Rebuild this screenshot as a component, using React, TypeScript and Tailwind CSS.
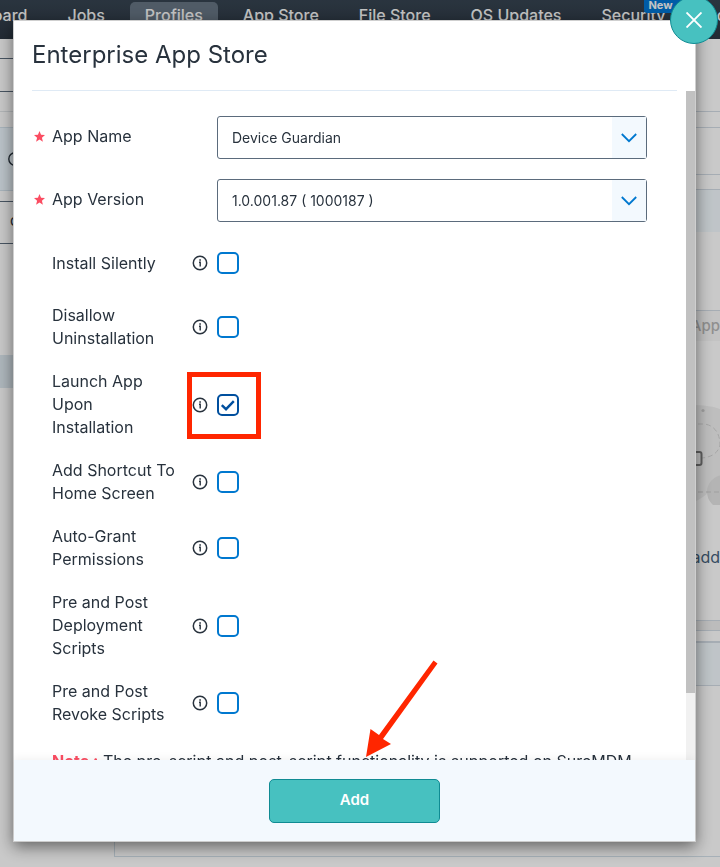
import React, { useState } from 'react';

interface ToggleOption {
  id: string;
  lines: string[];
  highlighted?: boolean;
}

const OPTIONS: ToggleOption[] = [
  { id: 'install-silently', lines: ['Install Silently'] },
  { id: 'disallow-uninstall', lines: ['Disallow', 'Uninstallation'] },
  { id: 'launch-app', lines: ['Launch App', 'Upon', 'Installation'], highlighted: true },
  { id: 'add-shortcut', lines: ['Add Shortcut To', 'Home Screen'] },
  { id: 'auto-grant', lines: ['Auto-Grant', 'Permissions'] },
  { id: 'deploy-scripts', lines: ['Pre and Post', 'Deployment', 'Scripts'] },
  { id: 'revoke-scripts', lines: ['Pre and Post', 'Revoke Scripts'] },
];

const NAV_ITEMS = ['Dashboard', 'Jobs', 'Profiles', 'App Store', 'File Store', 'OS Updates', 'Security', 'Account'];

const InfoIcon = () => (
  <svg viewBox="0 0 16 16" className="w-4 h-4 shrink-0 text-[#28323d]" fill="none" stroke="currentColor" aria-hidden="true">
    <circle cx="8" cy="8" r="6.7" strokeWidth="1.5" />
    <path d="M7 7.2H8.2V11.5" strokeWidth="1.4" />
    <path d="M7.3 5H8.9" strokeWidth="1.4" />
  </svg>
);

const StarIcon = () => (
  <svg viewBox="0 0 10 10" className="w-[11px] h-[11px]" fill="#fb4d62" aria-hidden="true">
    <path d="M5 0L6.4 3.4L10 3.7L7.2 6.1L8.1 9.7L5 7.8L1.9 9.7L2.8 6.1L0 3.7L3.6 3.4Z" />
  </svg>
);

interface SelectRowProps {
  id: string;
  label: string;
  value: string;
}

const SelectRow: React.FC<SelectRowProps> = ({ id, label, value }) => (
  <div className="flex shrink-0 items-center">
    <span className="w-[18px] shrink-0 pb-[2px]"><StarIcon /></span>
    <label htmlFor={id} className="w-[165px] shrink-0 pb-[2px]">{label}</label>
    <div className="relative flex-1">
      <select
        id={id}
        defaultValue={value}
        className="block w-full h-[43px] appearance-none rounded-[3px] border border-[#5b6b7c] bg-white pl-[14px] text-[14px] text-[#28323d]"
      >
        <option>{value}</option>
      </select>
      <span className="pointer-events-none absolute inset-y-px right-px w-[34px] flex items-center justify-center bg-[#f3f9fe]">
        <svg viewBox="0 0 16 10" className="w-4 h-[10px]" fill="none" stroke="#0078cf" strokeWidth="1.8" aria-hidden="true">
          <path d="M0.8 1L8 8.2L15.2 1" />
        </svg>
      </span>
    </div>
  </div>
);

interface ToggleRowProps {
  option: ToggleOption;
  checked: boolean;
  onToggle: () => void;
}

const ToggleRow: React.FC<ToggleRowProps> = ({ option, checked, onToggle }) => (
  <div className="flex shrink-0 items-center min-h-[42px] pl-[18px]">
    <label htmlFor={option.id} className="w-[140px] shrink-0">
      {option.lines.map(line => (
        <span key={line} className="block">{line}</span>
      ))}
    </label>
    <div className="relative flex items-center gap-[9px]">
      <InfoIcon />
      <span className="relative block w-[22px] h-[22px]">
        <input
          id={option.id}
          type="checkbox"
          checked={checked}
          onChange={onToggle}
          className="block w-[22px] h-[22px] appearance-none rounded-[5px] border-2 border-[#0078cf] bg-white checked:border-[#004f9e]"
        />
        {checked && (
          <svg viewBox="0 0 22 22" className="pointer-events-none absolute inset-0" fill="none" stroke="#004f9e" strokeWidth="2.4" aria-hidden="true">
            <path d="M4.8 11.2L9 15.2L16.8 7.2" />
          </svg>
        )}
      </span>
      {option.highlighted && (
        <span className="pointer-events-none absolute -left-[5px] -right-[22px] -top-[22px] h-[67px] border-[5px] border-[#ff2600]" />
      )}
    </div>
  </div>
);

const Backdrop = () => (
  <div className="flex min-h-screen flex-col bg-[#fcfcfc]" aria-hidden="true">
    <header className="h-[39px] overflow-hidden bg-linear-to-b from-[#35424f] to-[#2b3541]">
      <nav className="flex w-max gap-[10px] -ml-[71px] pt-[2px] text-[16px] font-medium text-[#f4f4f4]">
        {NAV_ITEMS.map(item => (
          <a
            key={item}
            href="#"
            tabIndex={-1}
            className={`relative h-[30px] px-[15px] leading-[27px] ${item === 'Profiles' ? 'rounded-[5px] bg-[#647280]' : ''}`}
          >
            {item}
            {item === 'Security' && (
              <span className="absolute -top-[4px] -right-1 h-[15px] w-10 rounded-[3px] bg-[#0074d0] pl-1 text-[11px] font-bold leading-[15px]">
                New
              </span>
            )}
          </a>
        ))}
      </nav>
    </header>

    <div className="flex flex-1">
      <aside className="w-[114px] shrink-0 text-[#28323d]">
        <div className="h-5 border-b border-[#5b6b7c]" />
        <div className="h-[33px] border-b border-[#5b6b7c]" />
        <div className="h-5 border-b border-[#dfe3e6]" />
        <div className="mt-[15px] h-16 flex items-center border-y border-[#d2e0ea] bg-[#eaf4fb] pl-2">
          <svg viewBox="0 0 14 14" className="w-[14px] h-[14px]" fill="none" stroke="currentColor" strokeWidth="1.4">
            <circle cx="7" cy="7" r="6.2" />
          </svg>
        </div>
        <div className="mt-[10px] h-[43px] border-y border-[#5b6b7c] pl-[10px] text-[15px] leading-[38px]">c</div>
        <div className="mt-[111px] h-[33px] bg-[#dae5ec]" />
      </aside>

      <main className="mb-[10px] min-w-0 flex-1 border-b border-l border-[#d0dde6]">
        <div className="h-[73px] border-b border-[#d0d9e2]" />
        <div className="h-4 border-b border-[#d0d9e2]" />
        <div className="h-[47px] border-b border-[#d0d9e2]" />
        <div className="h-[15px] border-b border-[#d0d9e2]" />
        <div className="h-[42px] bg-[#eff6fa]" />
        <div className="h-[79px] border-b border-[#d0d9e2]" />
        <div className="flex h-[30px] justify-end overflow-hidden bg-[#f4f4f4] text-[15px] font-medium leading-[30px] text-[#b4b4b4]">App</div>
        <div className="mt-16 flex h-[100px] justify-end">
          <svg viewBox="0 0 30 100" className="h-[100px] w-[30px]" fill="none">
            <path d="M0 0C14 0 22 1 30 4V76C24 84 12 94 0 99Z" fill="#eeeeee" />
            <circle cx="34" cy="87" r="17" fill="#e2e2e2" />
            <circle cx="13" cy="5.500" r="1.600" fill="#c8c8c8" />
            <path d="M0 19H14C24 20 30 28 30 40C28 48 22 52 12 53" stroke="#d0d0d0" strokeDasharray="5 3" />
            <path d="M0 87H30" stroke="#c8c8c8" strokeDasharray="5 3" />
            <rect x="-6" y="47" width="17.500" height="13" rx="2" stroke="#777" strokeWidth="2" />
          </svg>
        </div>
        <div className="mt-10 flex h-6 justify-end overflow-hidden text-[16px] leading-6 text-[#44607a]">add</div>
        <div className="mt-[51px] h-[11px] border-y border-[#d0d9e2] bg-[#ececec]" />
        <div className="mt-[10px] h-[45px] border-b border-t-2 border-[#d0d9e2] bg-[#eff6fa]" />
      </main>
    </div>
  </div>
);

const App: React.FC = () => {
  const [selected, setSelected] = useState<string[]>(['launch-app']);

  const toggle = (id: string) => {
    setSelected(prev => (prev.includes(id) ? prev.filter(s => s !== id) : [...prev, id]));
  };

  return (
    <div className="relative h-screen overflow-hidden font-['Inter','Liberation_Sans',sans-serif]">
      <Backdrop />

      {/* Modal */}
      <div className="fixed inset-0 flex bg-black/20 pt-5 pr-6 pb-[25px] pl-[13px]">
        <div
          role="dialog"
          aria-labelledby="dialog-title"
          className="relative flex min-w-0 flex-1 flex-col border border-[#cfcfcf] bg-white text-[#28323d] shadow-[0_5px_15px_rgba(0,0,0,0.5)]"
        >
          <button
            type="button"
            aria-label="Close"
            className="absolute -right-[23px] -top-[25px] z-10 flex h-12 w-12 items-center justify-center rounded-full border border-[#0f8b93] bg-[#47c1c0]"
          >
            <svg viewBox="0 0 16 16" className="h-4 w-4" fill="none" stroke="white" strokeWidth="1.900" aria-hidden="true">
              <path d="M0.500 0.500L15.500 15.500M15.500 0.500L0.500 15.500" />
            </svg>
          </button>

          <div className="mx-[18px] h-[70px] shrink-0 border-b border-[#dfeaf5]">
            <h2 id="dialog-title" className="text-[24px] leading-[68px]">Enterprise App Store</h2>
          </div>

          <div className="flex min-h-0 flex-1">
            <div className="flex min-w-0 flex-1 flex-col gap-5 overflow-hidden pt-[25px] pl-5 pr-[39px] text-[16px] leading-[23px]">
              <SelectRow id="app-name" label="App Name" value="Device Guardian" />
              <SelectRow id="app-version" label="App Version" value="1.0.001.87 ( 1000187 )" />
              {OPTIONS.map(option => (
                <ToggleRow
                  key={option.id}
                  option={option}
                  checked={selected.includes(option.id)}
                  onToggle={() => toggle(option.id)}
                />
              ))}
              <p className="shrink-0 pt-1 pl-[18px] whitespace-nowrap">
                <strong className="font-bold text-[#fb4d62]">Note :</strong> The pre-script and post-script functionality is supported on SureMDM
              </p>
            </div>
            <div className="w-[9px] shrink-0 bg-[#f1f1f1]">
              <div className="h-[90%] bg-[#c1c1c1]" />
            </div>
          </div>

          <div className="flex h-[81px] shrink-0 items-center justify-center bg-[#f3f9fe] shadow-[0_-2px_8px_rgba(0,0,0,0.05)]">
            <div className="relative">
              <button
                type="button"
                className="block h-11 w-[171px] rounded-[5px] border border-[#0f8b93] bg-[#47c1c0] text-[15px] font-semibold text-white"
              >
                Add
              </button>
              <svg viewBox="0 0 72 97" className="pointer-events-none absolute bottom-[66px] left-[97px] h-[97px] w-[72px]" fill="#ff2600" aria-hidden="true">
                <path d="M67.500 0.500L71.500 3.500L17 79L25 84L0 97L4.500 69L13 75Z" />
              </svg>
            </div>
          </div>
        </div>
      </div>
    </div>
  );
};

export default App;
